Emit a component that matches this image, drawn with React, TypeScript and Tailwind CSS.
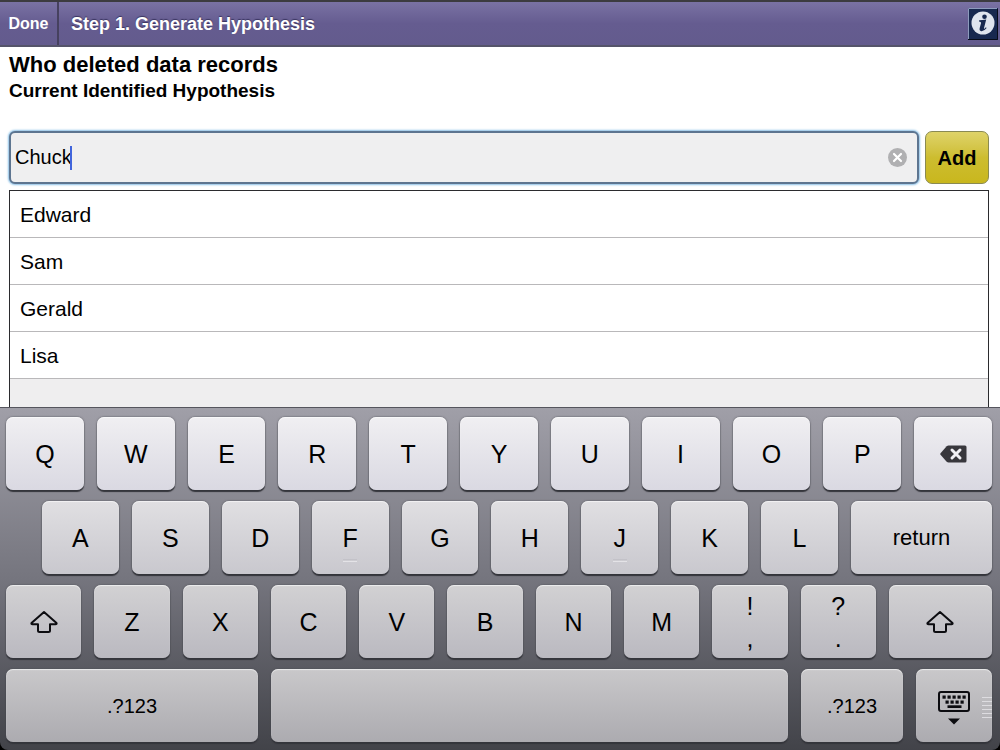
import { useState } from "react";
import type { ReactNode } from "react";

const topRow = ["Q", "W", "E", "R", "T", "Y", "U", "I", "O", "P"];
const homeRow = ["A", "S", "D", "F", "G", "H", "J", "K", "L"];
const bottomRow = ["Z", "X", "C", "V", "B", "N", "M"];
const names = ["Edward", "Sam", "Gerald", "Lisa"];

// one shade per keyboard row, the keys get darker towards the bottom
const shades = {
  first: "from-[#f0eff2] to-[#dad9e2]",
  second: "from-[#e0dfe2] to-[#c9c8ce]",
  third: "from-[#d2d1d3] to-[#bab9c0]",
  fourth: "from-[#c9c8ca] to-[#acabb0]",
};

type KeyProps = {
  shade: string;
  size?: string;
  label?: string;
  children?: ReactNode;
};

const Key = ({ shade, size = "flex-1 text-[25px]", label, children }: KeyProps) => {
  return (
    <button
      type="button"
      aria-label={label}
      className={`relative flex h-[73px] min-w-0 flex-col items-center justify-center rounded-[7px] bg-linear-to-b leading-8 text-black shadow-[0_2px_1px_#34353b,0_0_2px_#4b4c54,inset_0_1px_1px_#ffffff99] ${shade} ${size}`}
    >
      {children}
    </button>
  );
};

const ShiftIcon = () => (
  <svg width="28" height="24" viewBox="0 0 28 24" fill="none" stroke="#0c0c10" strokeWidth="2" strokeLinejoin="round">
    <path d="M14 2 L26.5 13 Q27 14.3 25.5 14.3 H20 V20.5 Q20 22 18.5 22 H9.5 Q8 22 8 20.5 V14.3 H2.5 Q1 14.3 1.5 13 Z" />
  </svg>
);

const DeleteIcon = () => (
  <svg width="27" height="18" viewBox="0 0 27 18">
    <path d="M8.5 0.5 H25 Q26.5 0.5 26.5 2 V16 Q26.5 17.5 25 17.5 H8.5 Q7.5 17.5 6.7 16.7 L0.5 9.7 Q0 9 0.5 8.3 L6.7 1.3 Q7.5 0.5 8.5 0.5 Z" fill="#38373c" />
    <path d="M12 5 L20 13 M20 5 L12 13" stroke="#f1f0f4" strokeWidth="3" strokeLinecap="round" />
  </svg>
);

const HideKeyboardIcon = () => (
  <svg width="32" height="34" viewBox="0 0 32 34" fill="#0c0c10">
    <rect x="1" y="1" width="30" height="19" rx="2" fill="none" stroke="#0c0c10" strokeWidth="2" />
    {[5, 10, 15, 20, 25].map((x) => (
      <rect key={x} x={x - 0.5} y="4.5" width="3.2" height="3.2" />
    ))}
    {[8, 13, 18, 23].map((x) => (
      <rect key={x} x={x - 0.5} y="9.5" width="3.2" height="3.2" />
    ))}
    <rect x="9.5" y="14.3" width="14" height="2.7" />
    <path d="M10 27.5 H22 L16 33.5 Z" />
  </svg>
);

const InfoIcon = () => (
  <svg width="30" height="32" viewBox="0 0 30 32">
    <rect width="30" height="32" fill="#17284f" />
    <path d="M0.5 31 V0.5 H29" fill="none" stroke="#8d9bbd" />
    <path d="M0 31.5 H29.5 V1" fill="none" stroke="#070b18" />
    <circle cx="15" cy="15" r="11.5" fill="#dfe4ee" />
    <circle cx="16.5" cy="8.7" r="2.3" fill="#17284f" />
    <path d="M11.2 12.3 Q14.5 12 18.2 11.4 L16 20 Q15.8 21.3 16.7 20.6 L17.9 19.3 L18.6 19.9 Q16 23.4 13.3 23.2 Q11 22.8 11.7 20 L13.1 14.9 Q13.2 13.8 11 13.6 Z" fill="#17284f" />
  </svg>
);

const Keyboard = () => {
  return (
    <div className="bg-black">
      <div className="flex flex-col gap-[11px] rounded-b-lg border-t border-[#55555d] bg-linear-to-b from-[#a09fa8] via-[#75757e] to-[#424349] pt-[9px] pr-2 pb-2 pl-[6px]">
        <div className="flex gap-[13px]">
          {topRow.map((letter) => (
            <Key key={letter} shade={shades.first}>{letter}</Key>
          ))}
          <Key shade={shades.first} label="Delete">
            <DeleteIcon />
          </Key>
        </div>

        <div className="flex gap-[13px] pl-9">
          {homeRow.map((letter) => (
            <Key key={letter} shade={shades.second}>
              {letter}
              {/* raised bump on F and J */}
              {(letter === "F" || letter === "J") && (
                <span className="absolute bottom-3 h-[3px] w-[14px] border-y border-t-[#c3c2c8] border-b-[#e4e3e7]" />
              )}
            </Key>
          ))}
          <Key shade={shades.second} size="w-[141px] text-[22px]">return</Key>
        </div>

        <div className="flex gap-[13px]">
          <Key shade={shades.third} label="Left shift">
            <ShiftIcon />
          </Key>
          {bottomRow.map((letter) => (
            <Key key={letter} shade={shades.third}>{letter}</Key>
          ))}
          <Key shade={shades.third}>
            <span>!</span>
            <span>,</span>
          </Key>
          <Key shade={shades.third}>
            <span>?</span>
            <span>.</span>
          </Key>
          <Key shade={shades.third} size="w-[103px]" label="Right shift">
            <ShiftIcon />
          </Key>
        </div>

        <div className="flex gap-[13px]">
          <Key shade={shades.fourth} size="w-[252px] text-[20px]">.?123</Key>
          <Key shade={shades.fourth} label="Space" />
          <Key shade={shades.fourth} size="w-[102px] text-[20px]">.?123</Key>
          <Key shade={shades.fourth} size="w-[76px] pt-1" label="Hide keyboard">
            <HideKeyboardIcon />
            <span className="absolute right-0 flex flex-col gap-[3px]">
              <span className="h-px w-[10px] bg-[#dddce0]" />
              <span className="h-px w-[10px] bg-[#dddce0]" />
              <span className="h-px w-[10px] bg-[#dddce0]" />
              <span className="h-px w-[10px] bg-[#dddce0]" />
              <span className="h-px w-[10px] bg-[#dddce0]" />
              <span className="h-px w-[10px] bg-[#dddce0]" />
            </span>
          </Key>
        </div>
      </div>
    </div>
  );
};

const App = () => {
  const [name, setName] = useState("Chuck");

  return (
    <div className="flex min-h-screen flex-col bg-white font-['Liberation_Sans',Arial,sans-serif] text-black">
      {/* Header */}
      <header className="flex h-[47px] items-stretch border-t-2 border-b-2 border-t-[#3c3b40] border-b-[#55546a] bg-linear-to-b from-[#7a72a4] via-[#655c90] to-[#635b8d] font-bold text-white text-shadow-[0_-1px_1px_#3a3560]">
        <button type="button" className="w-[59px] border-r-2 border-[#46415f] text-base">
          Done
        </button>
        <h1 className="flex flex-1 items-center pl-3 text-lg">Step 1. Generate Hypothesis</h1>
        <button type="button" aria-label="Info" className="flex items-center pr-[2px]">
          <InfoIcon />
        </button>
      </header>

      <main className="flex flex-1 flex-col pt-1 pr-[11px] pl-[9px]">
        <h2 className="text-[22px] leading-7 font-bold">Who deleted data records</h2>
        <h3 className="text-[19px] leading-6 font-bold">Current Identified Hypothesis</h3>

        {/* Add form */}
        <form className="mt-7 flex gap-[6px]" onSubmit={(e) => e.preventDefault()}>
          <div className="relative flex flex-1 items-center">
            <input
              type="text"
              aria-label="Hypothesis"
              value={name}
              onChange={(e) => setName(e.target.value)}
              className="h-[53px] w-full rounded-[6px] border-2 border-[#5d7590] bg-[#efeff0] pl-1 text-[20px] shadow-[0_0_2px_1px_#8cc0e6] outline-none"
            />
            <span className="absolute left-[61px] h-6 w-[2px] bg-[#4165dc]" />
            <button
              type="button"
              aria-label="Clear"
              onClick={() => setName("")}
              className="absolute right-3"
            >
              <svg width="19" height="19" viewBox="0 0 19 19">
                <circle cx="9.5" cy="9.5" r="9.5" fill="#b0b0b2" />
                <path d="M6 6 L13 13 M13 6 L6 13" stroke="#fff" strokeWidth="2.2" strokeLinecap="round" />
              </svg>
            </button>
          </div>
          <button
            type="submit"
            className="w-16 rounded-[7px] border border-[#8a8a52] bg-linear-to-b from-[#dfd368] via-[#cdbd2f] to-[#c9b71d] text-[20px] font-bold"
          >
            Add
          </button>
        </form>

        {/* Hypothesis list */}
        <ul className="mt-[6px] flex-1 border border-b-0 border-[#2b2b2e] bg-[#efeeef]">
          {names.map((item) => (
            <li key={item} className="flex h-[47px] items-center border-b border-[#b9b8ba] bg-white pt-[2px] pl-[10px] text-[21px]">
              {item}
            </li>
          ))}
        </ul>
      </main>

      <Keyboard />
    </div>
  );
};

export default App;
